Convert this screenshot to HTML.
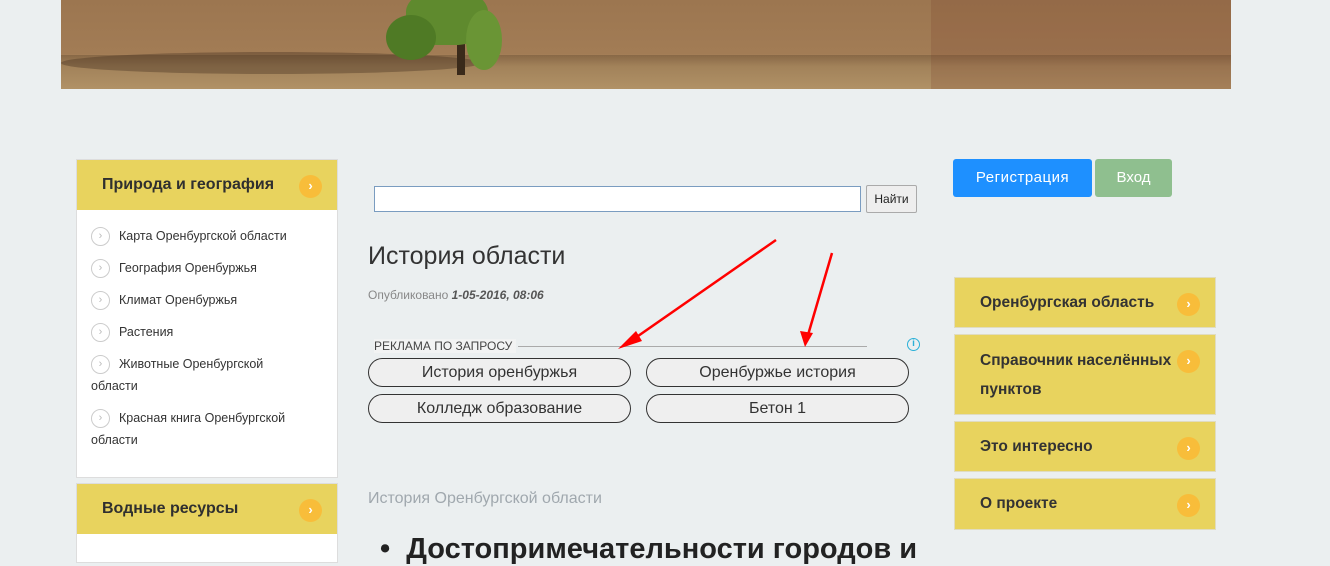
<!DOCTYPE html>
<html><head><meta charset="utf-8"><style>
*{box-sizing:border-box;margin:0;padding:0}
body{width:1330px;height:550px;overflow:hidden;background:#ebeff0;font-family:"Liberation Sans","DejaVu Sans",sans-serif;position:relative;color:#333}
.abs{position:absolute}
.banner{left:61px;top:0;width:1170px;height:89px;background:linear-gradient(180deg,#9c7650 0%,#a27c55 60%,#b89468 75%,#a68660 100%);overflow:hidden}
.hdr{background:#e8d35e;color:#2f2f2f;font-size:16px;font-weight:bold}
.arr{position:absolute;width:23px;height:23px;border-radius:50%;background:#f8bd3a;color:#fff;font-size:13px;font-weight:bold;text-align:center;line-height:22px}
.item{position:absolute;left:91px;width:205px;font-size:12.5px;line-height:22px;color:#333}
.ci{display:inline-block;width:19px;height:19px;border:1px solid #ccc;border-radius:50%;color:#bbb;font-size:11px;text-align:center;line-height:17px;margin-right:9px;vertical-align:middle;background:#fff}
.pill{position:absolute;height:29px;border:1px solid #333;border-radius:15px;background:#efefef;font-size:16px;text-align:center;line-height:27px;color:#333;width:263px}
.rb{position:absolute;left:954px;width:262px;background:#e8d35e;border:1px solid #e0dcc0;font-size:15.5px;font-weight:bold;color:#333;padding-left:25px}
</style></head><body>
<div class="abs banner">
<div class="abs" style="left:0;top:55px;width:1170px;height:34px;background:linear-gradient(180deg,rgba(70,50,30,.3),rgba(190,160,110,.45))"></div>
<div class="abs" style="left:0;top:52px;width:420px;height:22px;background:rgba(60,40,25,.35);border-radius:50%"></div>
<div class="abs" style="left:870px;top:0;width:300px;height:89px;background:rgba(120,60,40,.2)"></div>
<div class="abs" style="left:396px;top:20px;width:8px;height:55px;background:#3a2a1a"></div>
<div class="abs" style="left:345px;top:-10px;width:82px;height:55px;background:#5f8a2e;border-radius:40%"></div>
<div class="abs" style="left:325px;top:15px;width:50px;height:45px;background:#4f7a25;border-radius:50%"></div>
<div class="abs" style="left:405px;top:10px;width:36px;height:60px;background:#6a9535;border-radius:50%"></div>
</div>

<div class="abs" style="left:76px;top:159px;width:262px;height:319px;background:#fff;border:1px solid #ddd"></div>
<div class="abs hdr" style="left:77px;top:160px;width:260px;height:50px;padding:16px 0 0 25px">Природа и география</div>
<div class="arr" style="left:299px;top:175px">›</div>
<div class="item" style="top:225px"><span class="ci">›</span>Карта Оренбургской области</div>
<div class="item" style="top:257px"><span class="ci">›</span>География Оренбуржья</div>
<div class="item" style="top:289px"><span class="ci">›</span>Климат Оренбуржья</div>
<div class="item" style="top:321px"><span class="ci">›</span>Растения</div>
<div class="item" style="top:353px"><span class="ci">›</span>Животные Оренбургской области</div>
<div class="item" style="top:407px"><span class="ci">›</span>Красная книга Оренбургской области</div>

<div class="abs" style="left:76px;top:483px;width:262px;height:80px;background:#fff;border:1px solid #ddd"></div>
<div class="abs hdr" style="left:77px;top:484px;width:260px;height:50px;padding:16px 0 0 25px">Водные ресурсы</div>
<div class="arr" style="left:299px;top:499px">›</div>

<div class="abs" style="left:374px;top:186px;width:487px;height:26px;background:#fff;border:1px solid #7a9cc0"></div>
<div class="abs" style="left:866px;top:185px;width:51px;height:28px;background:#eee;border:1px solid #aaa;border-radius:2px;font-size:12px;text-align:center;line-height:26px;color:#222">Найти</div>
<div class="abs" style="left:368px;top:242px;font-size:25px;color:#333">История области</div>
<div class="abs" style="left:368px;top:288px;font-size:12px;color:#888">Опубликовано <b style="font-style:italic;color:#555">1-05-2016, 08:06</b></div>
<div class="abs" style="left:374px;top:339px;font-size:12px;color:#444;background:#f2f3f3;padding-right:4px">РЕКЛАМА ПО ЗАПРОСУ</div>
<div class="abs" style="left:518px;top:346px;width:349px;height:1px;background:#aaa"></div>
<div class="abs" style="left:907px;top:338px;width:13px;height:13px;border:1.5px solid #2ab0d8;border-radius:50%;color:#2ab0d8;font-size:10px;font-weight:bold;text-align:center;line-height:10px">i</div>
<div class="pill" style="left:368px;top:358px">История оренбуржья</div>
<div class="pill" style="left:646px;top:358px">Оренбуржье история</div>
<div class="pill" style="left:368px;top:394px">Колледж образование</div>
<div class="pill" style="left:646px;top:394px">Бетон 1</div>
<svg class="abs" style="left:600px;top:235px" width="240" height="120">
<g stroke="#f00" stroke-width="2.5" fill="#f00">
<line x1="176" y1="5" x2="28" y2="108"/>
<polygon points="18,114 36,96 42,106" stroke="none"/>
<line x1="232" y1="18" x2="208" y2="100"/>
<polygon points="205,112 200,96 213,98" stroke="none"/>
</g></svg>
<div class="abs" style="left:368px;top:490px;font-size:16px;color:#a0a8ae">История Оренбургской области</div>
<div class="abs" style="left:380px;top:533px;font-size:29px;font-weight:bold;color:#222;white-space:nowrap">•&nbsp; Достопримечательности городов и</div>

<div class="abs" style="left:953px;top:159px;width:139px;height:38px;background:#1e90ff;border-radius:3px;color:#fff;font-size:15px;text-align:center;line-height:38px;letter-spacing:.5px">Регистрация</div>
<div class="abs" style="left:1095px;top:159px;width:77px;height:38px;background:#8fbf8f;border-radius:3px;color:#fff;font-size:15px;text-align:center;line-height:38px">Вход</div>

<div class="rb" style="top:277px;height:51px;line-height:50px">Оренбургская область</div>
<div class="arr" style="left:1177px;top:293px">›</div>
<div class="rb" style="top:334px;height:81px;line-height:29px;padding-top:11px;padding-right:30px;white-space:nowrap">Справочник населённых<br>пунктов</div>
<div class="arr" style="left:1177px;top:350px">›</div>
<div class="rb" style="top:421px;height:51px;line-height:50px">Это интересно</div>
<div class="arr" style="left:1177px;top:437px">›</div>
<div class="rb" style="top:478px;height:52px;line-height:50px">О проекте</div>
<div class="arr" style="left:1177px;top:494px">›</div>
</body></html>
